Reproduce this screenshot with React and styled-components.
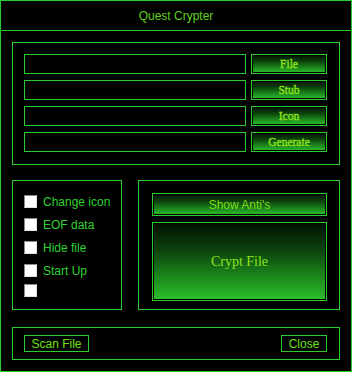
import React from "react";
import styled, { createGlobalStyle } from "styled-components";

const G = "#2dcc2d";

const Global = createGlobalStyle`
  html, body { margin: 0; padding: 0; background: #000; }
  * { box-sizing: border-box; }
`;

const Frame = styled.div`
  width: 352px;
  height: 372px;
  border: 1px solid ${G};
  background: #000;
  display: flex;
  flex-direction: column;
`;

const TitleBar = styled.div`
  height: 30px;
  border-bottom: 1px solid ${G};
  display: flex;
  align-items: center;
  justify-content: center;
  color: #5fd21e;
  font-family: "Liberation Sans", Arial, sans-serif;
  font-size: 12px;
  padding-top: 1px;
`;

const Body = styled.div`
  padding: 11px;
  display: flex;
  flex-direction: column;
`;

const Panel = styled.div`
  border: 1px solid ${G};
  height: ${(p) => p.h}px;
`;

const TopPanel = styled(Panel)`
  width: 328px;
  padding: 11px 12px 0 11px;
  display: flex;
  flex-direction: column;
  gap: 6px;
`;

const Row = styled.div`
  display: flex;
  gap: 5px;
  height: 20px;
`;

const Field = styled.div`
  width: 222px;
  height: 20px;
  border: 1px solid ${G};
`;

const GradBtn = styled.div`
  border: 1px solid ${G};
  box-shadow: inset 0 0 0 1px #000;
  background: linear-gradient(to bottom, #021002 0%, #0c420c 35%, #1c881c 70%, #2ec02e 100%);
  display: flex;
  align-items: center;
  justify-content: center;
  color: #8ee31c;
`;

const SmallBtn = styled(GradBtn)`
  width: 76px;
  height: 20px;
  font-family: "Liberation Serif", serif;
  font-size: 11.5px;
  -webkit-text-stroke: 0.35px #8ee31c;
`;

const Middle = styled.div`
  display: flex;
  gap: 16px;
  margin-top: 15px;
`;

const CheckPanel = styled(Panel)`
  width: 110px;
  padding: 14px 0 0 11px;
  display: flex;
  flex-direction: column;
`;

const CheckRow = styled.label`
  display: flex;
  align-items: center;
  height: 13px;
  margin-bottom: ${(p) => p.mb}px;
  color: #2fd12f;
  font-family: "Liberation Sans", Arial, sans-serif;
  font-size: 12px;
`;

const Box = styled.span`
  width: 13px;
  height: 13px;
  background: #fff;
  border: 1px solid #8a8a8a;
  border-right-color: #e0e0e0;
  border-bottom-color: #e0e0e0;
  margin-right: 6px;
  flex: none;
`;

const ActionPanel = styled(Panel)`
  width: 202px;
  padding: 12px 12px 0 13px;
  display: flex;
  flex-direction: column;
  gap: 6px;
`;

const AntiBtn = styled(GradBtn)`
  height: 23px;
  font-family: "Liberation Sans", Arial, sans-serif;
  font-size: 12px;
  color: #7fdb1a;
`;

const CryptBtn = styled(GradBtn)`
  height: 79px;
  font-family: "Liberation Serif", serif;
  font-size: 14px;
  color: #8ee31c;
  background: linear-gradient(to bottom, #021002 0%, #0c420c 35%, #1c881c 70%, #2dc02d 100%);
`;

const BottomPanel = styled(Panel)`
  width: 328px;
  margin-top: 17px;
  padding: 0 12px 0 11px;
  display: flex;
  align-items: center;
  justify-content: space-between;
`;

const OutlineBtn = styled.div`
  width: ${(p) => p.w}px;
  height: 17px;
  border: 1px solid ${G};
  display: flex;
  align-items: center;
  justify-content: center;
  color: #6ee019;
  font-family: "Liberation Sans", Arial, sans-serif;
  font-size: 12px;
  padding-top: 1px;
`;

const labels = [
  ["Change icon", 10],
  ["EOF data", 10],
  ["Hide file", 10],
  ["Start Up", 7],
  ["", 0],
];

export default function App() {
  return (
    <>
      <Global />
      <Frame>
        <TitleBar>Quest Crypter</TitleBar>
        <Body>
          <TopPanel h={123}>
            {["File", "Stub", "Icon", "Generate"].map((t) => (
              <Row key={t}>
                <Field />
                <SmallBtn>{t}</SmallBtn>
              </Row>
            ))}
          </TopPanel>
          <Middle>
            <CheckPanel h={130}>
              {labels.map(([t, mb], i) => (
                <CheckRow key={i} mb={mb}>
                  <Box />
                  {t}
                </CheckRow>
              ))}
            </CheckPanel>
            <ActionPanel h={130}>
              <AntiBtn>Show Anti's</AntiBtn>
              <CryptBtn>Crypt File</CryptBtn>
            </ActionPanel>
          </Middle>
          <BottomPanel h={33}>
            <OutlineBtn w={65}>Scan File</OutlineBtn>
            <OutlineBtn w={46}>Close</OutlineBtn>
          </BottomPanel>
        </Body>
      </Frame>
    </>
  );
}
